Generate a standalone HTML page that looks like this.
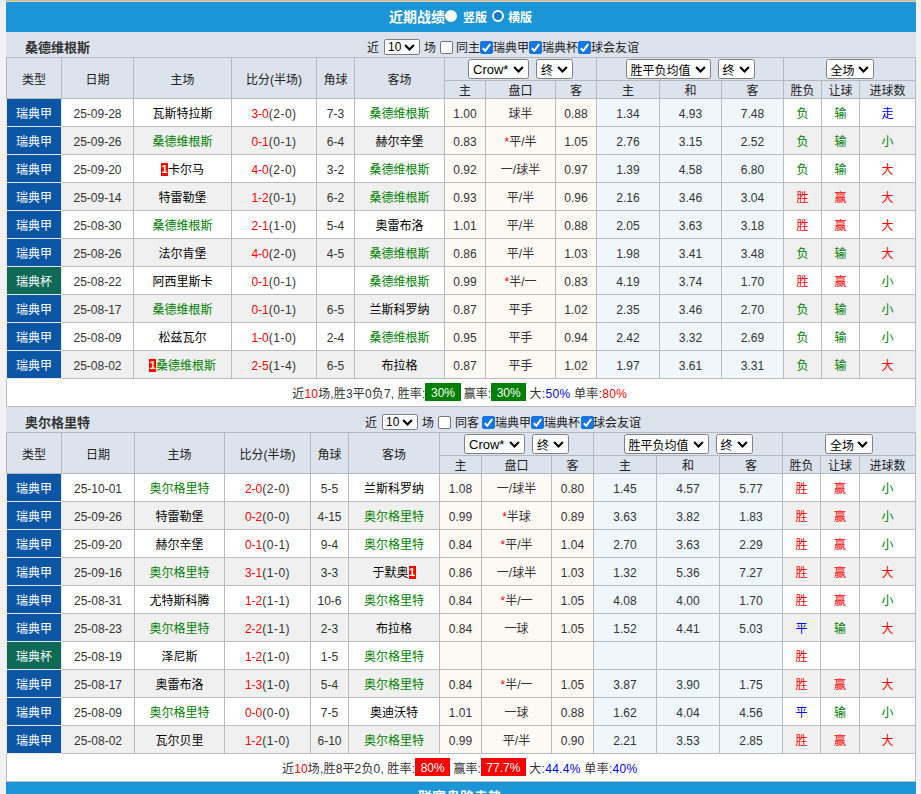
<!DOCTYPE html>
<html lang="zh-CN"><head><meta charset="utf-8"><title>近期战绩</title>
<style>
html,body{margin:0;padding:0;}
body{width:921px;height:794px;overflow:hidden;background:#f2f2f4;font-family:"Liberation Sans","Noto Sans CJK SC",sans-serif;font-size:12px;color:#333;position:relative;}
.topline{position:absolute;left:6px;top:0;width:910px;height:1px;background:#bdb7c2;}
.topline2{position:absolute;left:6px;top:1px;width:910px;height:1px;background:#e9d88e;}
.wrap{position:absolute;left:6px;top:2px;width:910px;}
.bar{height:30px;background:#1b95d6;color:#fff;text-align:center;line-height:30px;font-size:12px;position:relative;}
.bar b{font-size:14px;position:absolute;left:383px;top:0;}
.bar2 b{left:412px;top:0;}
.bar2{position:absolute;top:780px;left:0;width:910px;}
.rd{position:absolute;width:12px;height:12px;border-radius:50%;border:2px solid #fff;top:8px;box-sizing:border-box;}
.r1{left:439px;background:#fff;}
.r2{left:486px;background:#1577d6;}
.rl{position:absolute;top:1px;font-size:12px;font-weight:bold;}
.l1{left:457px;}
.l2{left:502px;}
.tt{height:25px;background:#dde3ed;position:relative;width:910px;}
.tn{position:absolute;left:19px;top:3px;line-height:26px;font-size:13px;color:#333;}
.ctl{position:absolute;left:0;top:0;height:25px;line-height:32px;font-size:12px;color:#222;}
.ctl span,.ctl i{position:absolute;top:0;white-space:nowrap;}
.ctl i.cb{top:9px;}
.ctl .sel{top:7px;height:16px;line-height:14px;border-radius:2px;width:36px;font-size:12px;padding-left:3px;}
.ctl .sel .ar{top:4px;}
.t{border-collapse:collapse;table-layout:fixed;width:910px;margin:0;}
.t th,.t td{border:1px solid #bbb;padding:0;text-align:center;font-weight:normal;overflow:hidden;white-space:nowrap;}
.t th{background:#dde3ed;color:#222;border-color:#b4b8c0;}
.h1{height:23px;}
.h2{height:18px;}
.t td{height:27px;}
tr.ra td{background:#fff;}
tr.rz td{background:#f0f0f0;}
.t td.ty{background:#0b55a5;color:#fff;border-color:#e6e4e6;}
.t td.ty.cup{background:#0e6a57;}
.t td.o1{background:#fdf9f5;}
.t td.o2{background:#f0f7fc;}
.g{color:#008000;}
.r{color:#f00;}
.b{color:#00f;}
.t td.g{color:#008000;}
.t td.r{color:#f00;}
.t td.b{color:#00f;}
.rc{font-style:normal;background:#f00;color:#ffd;font-weight:bold;font-size:11px;display:inline-block;width:7px;height:13px;line-height:13px;vertical-align:1px;text-align:center;}
tr.sm td{background:#fff;height:27px;}
.bg{color:#fff;padding:3px 5.5px 1px;margin:0;position:relative;top:-1px;}
.gb{background:#008000;}
.rb{background:#f00;}
.sel{display:inline-block;box-sizing:border-box;height:20px;border:1px solid #808080;border-radius:2.5px;background:#fff;color:#000;font-size:12px;line-height:17px;text-align:left;padding-left:4px;position:relative;vertical-align:middle;}
.ar{position:absolute;right:4px;top:6px;width:11px;height:6.6px;}
.ar path{fill:none;stroke:#000;stroke-width:1.9;}
.cb{width:13px;height:13px;box-sizing:border-box;border:1px solid #767676;border-radius:2px;background:#fff;}
.cb.on{background:#1675e0;border-color:#1675e0;}
.cb svg{position:absolute;left:-1px;top:-1px;width:13px;height:13px;}
.cb path{fill:none;stroke:#fff;stroke-width:2;}

.sc{width:61px;font-size:13px;}
.sz{width:37px;margin-left:7px;}
.sj{width:85px;}
.sq{width:48px;}

.t td.n{padding-top:2px;height:25px;}
.t td.tm{color:#000;}
.t td.tm.g{color:#008000;}

.smw{padding-right:2.5px;}
.pa{letter-spacing:0.15px;}
.pc{letter-spacing:0.3px;}

.sc{padding-top:1px;}
.sz,.sj,.sq{padding-top:3px;}
.hs{letter-spacing:.5px;}

</style></head><body>
<div class="topline"></div><div class="topline2"></div>
<div class="wrap">
<div class="bar"><b>近期战绩</b><i class="rd r1"></i><span class="rl l1">竖版</span><i class="rd r2"></i><span class="rl l2">横版</span></div>
<div class="tt"><b class="tn">桑德维根斯</b><div class="ctl"><span style="left:361px">近</span><span class="sel s10" style="left:378px">10<svg class="ar" viewBox="0 0 10 6"><path d="M1 1L5 5L9 1"/></svg></span><span style="left:418px">场</span><i class="cb" style="left:434px"></i><span style="left:450px">同主</span><i class="cb on" style="left:474px"><svg viewBox="0 0 13 13"><path d="M2.8 7.2L5.3 9.8L10.2 3.2"/></svg></i><span style="left:487px">瑞典甲</span><i class="cb on" style="left:523px"><svg viewBox="0 0 13 13"><path d="M2.8 7.2L5.3 9.8L10.2 3.2"/></svg></i><span style="left:536px">瑞典杯</span><i class="cb on" style="left:572px"><svg viewBox="0 0 13 13"><path d="M2.8 7.2L5.3 9.8L10.2 3.2"/></svg></i><span style="left:585px">球会友谊</span></div></div>
<table class="t"><colgroup><col style="width:55px"><col style="width:72px"><col style="width:98px"><col style="width:85px"><col style="width:38px"><col style="width:90px"><col style="width:41px"><col style="width:70px"><col style="width:41px"><col style="width:63px"><col style="width:62px"><col style="width:62px"><col style="width:38px"><col style="width:38px"><col style="width:56px"></colgroup>
<tr class="h1"><th rowspan="2">类型</th><th rowspan="2">日期</th><th rowspan="2">主场</th><th rowspan="2">比分(半场)</th><th rowspan="2">角球</th><th rowspan="2">客场</th><th colspan="3"><span class="sel sc">Crow*<svg class="ar" viewBox="0 0 10 6"><path d="M1 1L5 5L9 1"/></svg></span><span class="sel sz">终<svg class="ar" viewBox="0 0 10 6"><path d="M1 1L5 5L9 1"/></svg></span></th><th colspan="3"><span class="sel sj">胜平负均值<svg class="ar" viewBox="0 0 10 6"><path d="M1 1L5 5L9 1"/></svg></span><span class="sel sz">终<svg class="ar" viewBox="0 0 10 6"><path d="M1 1L5 5L9 1"/></svg></span></th><th colspan="3"><span class="sel sq">全场<svg class="ar" viewBox="0 0 10 6"><path d="M1 1L5 5L9 1"/></svg></span></th></tr>
<tr class="h2"><th>主</th><th>盘口</th><th>客</th><th>主</th><th>和</th><th>客</th><th>胜负</th><th>让球</th><th>进球数</th></tr>
<tr class="ra"><td class="ty">瑞典甲</td><td class="n">25-09-28</td><td class="tm">瓦斯特拉斯</td><td class="n"><span class="r">3-0</span><span class="hs">(2-0)</span></td><td class="n">7-3</td><td class="tm g">桑德维根斯</td><td class="o1 n">1.00</td><td class="o1">球半</td><td class="o1 n">0.88</td><td class="o2 n">1.34</td><td class="o2 n">4.93</td><td class="o2 n">7.48</td><td class="g">负</td><td class="g">输</td><td class="b">走</td></tr>
<tr class="rz"><td class="ty">瑞典甲</td><td class="n">25-09-26</td><td class="tm g">桑德维根斯</td><td class="n"><span class="r">0-1</span><span class="hs">(0-1)</span></td><td class="n">6-4</td><td class="tm">赫尔辛堡</td><td class="o1 n">0.83</td><td class="o1"><span class="r">*</span>平/半</td><td class="o1 n">1.05</td><td class="o2 n">2.76</td><td class="o2 n">3.15</td><td class="o2 n">2.52</td><td class="g">负</td><td class="g">输</td><td class="g">小</td></tr>
<tr class="ra"><td class="ty">瑞典甲</td><td class="n">25-09-20</td><td class="tm"><i class="rc">1</i>卡尔马</td><td class="n"><span class="r">4-0</span><span class="hs">(2-0)</span></td><td class="n">3-2</td><td class="tm g">桑德维根斯</td><td class="o1 n">0.92</td><td class="o1">一/球半</td><td class="o1 n">0.97</td><td class="o2 n">1.39</td><td class="o2 n">4.58</td><td class="o2 n">6.80</td><td class="g">负</td><td class="g">输</td><td class="r">大</td></tr>
<tr class="rz"><td class="ty">瑞典甲</td><td class="n">25-09-14</td><td class="tm">特雷勒堡</td><td class="n"><span class="r">1-2</span><span class="hs">(0-1)</span></td><td class="n">6-2</td><td class="tm g">桑德维根斯</td><td class="o1 n">0.93</td><td class="o1">平/半</td><td class="o1 n">0.96</td><td class="o2 n">2.16</td><td class="o2 n">3.46</td><td class="o2 n">3.04</td><td class="r">胜</td><td class="r">赢</td><td class="r">大</td></tr>
<tr class="ra"><td class="ty">瑞典甲</td><td class="n">25-08-30</td><td class="tm g">桑德维根斯</td><td class="n"><span class="r">2-1</span><span class="hs">(1-0)</span></td><td class="n">5-4</td><td class="tm">奥雷布洛</td><td class="o1 n">1.01</td><td class="o1">平/半</td><td class="o1 n">0.88</td><td class="o2 n">2.05</td><td class="o2 n">3.63</td><td class="o2 n">3.18</td><td class="r">胜</td><td class="r">赢</td><td class="r">大</td></tr>
<tr class="rz"><td class="ty">瑞典甲</td><td class="n">25-08-26</td><td class="tm">法尔肯堡</td><td class="n"><span class="r">4-0</span><span class="hs">(2-0)</span></td><td class="n">4-5</td><td class="tm g">桑德维根斯</td><td class="o1 n">0.86</td><td class="o1">平/半</td><td class="o1 n">1.03</td><td class="o2 n">1.98</td><td class="o2 n">3.41</td><td class="o2 n">3.48</td><td class="g">负</td><td class="g">输</td><td class="r">大</td></tr>
<tr class="ra"><td class="ty cup">瑞典杯</td><td class="n">25-08-22</td><td class="tm">阿西里斯卡</td><td class="n"><span class="r">0-1</span><span class="hs">(0-1)</span></td><td class="n"></td><td class="tm g">桑德维根斯</td><td class="o1 n">0.99</td><td class="o1"><span class="r">*</span>半/一</td><td class="o1 n">0.83</td><td class="o2 n">4.19</td><td class="o2 n">3.74</td><td class="o2 n">1.70</td><td class="r">胜</td><td class="r">赢</td><td class="g">小</td></tr>
<tr class="rz"><td class="ty">瑞典甲</td><td class="n">25-08-17</td><td class="tm g">桑德维根斯</td><td class="n"><span class="r">0-1</span><span class="hs">(0-1)</span></td><td class="n">6-5</td><td class="tm">兰斯科罗纳</td><td class="o1 n">0.87</td><td class="o1">平手</td><td class="o1 n">1.02</td><td class="o2 n">2.35</td><td class="o2 n">3.46</td><td class="o2 n">2.70</td><td class="g">负</td><td class="g">输</td><td class="g">小</td></tr>
<tr class="ra"><td class="ty">瑞典甲</td><td class="n">25-08-09</td><td class="tm">松兹瓦尔</td><td class="n"><span class="r">1-0</span><span class="hs">(1-0)</span></td><td class="n">2-4</td><td class="tm g">桑德维根斯</td><td class="o1 n">0.95</td><td class="o1">平手</td><td class="o1 n">0.94</td><td class="o2 n">2.42</td><td class="o2 n">3.32</td><td class="o2 n">2.69</td><td class="g">负</td><td class="g">输</td><td class="g">小</td></tr>
<tr class="rz"><td class="ty">瑞典甲</td><td class="n">25-08-02</td><td class="tm g"><i class="rc">1</i>桑德维根斯</td><td class="n"><span class="r">2-5</span><span class="hs">(1-4)</span></td><td class="n">6-5</td><td class="tm">布拉格</td><td class="o1 n">0.87</td><td class="o1">平手</td><td class="o1 n">1.02</td><td class="o2 n">1.97</td><td class="o2 n">3.61</td><td class="o2 n">3.31</td><td class="g">负</td><td class="g">输</td><td class="r">大</td></tr>
<tr class="sm"><td colspan="15"><span class="smw"><span class="pa">近<span class="r">10</span>场,胜3平0负7, 胜率:</span><span class="bg gb">30%</span> 赢率:<span class="bg gb">30%</span> <span class="pc">大:<span class="b">50%</span> 单率:<span class="r">80%</span></span></span></td></tr>
</table>
<div class="tt"><b class="tn">奥尔格里特</b><div class="ctl"><span style="left:359px">近</span><span class="sel s10" style="left:376px">10<svg class="ar" viewBox="0 0 10 6"><path d="M1 1L5 5L9 1"/></svg></span><span style="left:416px">场</span><i class="cb" style="left:432px"></i><span style="left:449px">同客</span><i class="cb on" style="left:476px"><svg viewBox="0 0 13 13"><path d="M2.8 7.2L5.3 9.8L10.2 3.2"/></svg></i><span style="left:489px">瑞典甲</span><i class="cb on" style="left:525px"><svg viewBox="0 0 13 13"><path d="M2.8 7.2L5.3 9.8L10.2 3.2"/></svg></i><span style="left:538px">瑞典杯</span><i class="cb on" style="left:575px"><svg viewBox="0 0 13 13"><path d="M2.8 7.2L5.3 9.8L10.2 3.2"/></svg></i><span style="left:587px">球会友谊</span></div></div>
<table class="t"><colgroup><col style="width:55px"><col style="width:73px"><col style="width:90px"><col style="width:86px"><col style="width:38px"><col style="width:91px"><col style="width:42px"><col style="width:70px"><col style="width:42px"><col style="width:63px"><col style="width:63px"><col style="width:63px"><col style="width:38px"><col style="width:39px"><col style="width:56px"></colgroup>
<tr class="h1"><th rowspan="2">类型</th><th rowspan="2">日期</th><th rowspan="2">主场</th><th rowspan="2">比分(半场)</th><th rowspan="2">角球</th><th rowspan="2">客场</th><th colspan="3"><span class="sel sc">Crow*<svg class="ar" viewBox="0 0 10 6"><path d="M1 1L5 5L9 1"/></svg></span><span class="sel sz">终<svg class="ar" viewBox="0 0 10 6"><path d="M1 1L5 5L9 1"/></svg></span></th><th colspan="3"><span class="sel sj">胜平负均值<svg class="ar" viewBox="0 0 10 6"><path d="M1 1L5 5L9 1"/></svg></span><span class="sel sz">终<svg class="ar" viewBox="0 0 10 6"><path d="M1 1L5 5L9 1"/></svg></span></th><th colspan="3"><span class="sel sq">全场<svg class="ar" viewBox="0 0 10 6"><path d="M1 1L5 5L9 1"/></svg></span></th></tr>
<tr class="h2"><th>主</th><th>盘口</th><th>客</th><th>主</th><th>和</th><th>客</th><th>胜负</th><th>让球</th><th>进球数</th></tr>
<tr class="ra"><td class="ty">瑞典甲</td><td class="n">25-10-01</td><td class="tm g">奥尔格里特</td><td class="n"><span class="r">2-0</span><span class="hs">(2-0)</span></td><td class="n">5-5</td><td class="tm">兰斯科罗纳</td><td class="o1 n">1.08</td><td class="o1">一/球半</td><td class="o1 n">0.80</td><td class="o2 n">1.45</td><td class="o2 n">4.57</td><td class="o2 n">5.77</td><td class="r">胜</td><td class="r">赢</td><td class="g">小</td></tr>
<tr class="rz"><td class="ty">瑞典甲</td><td class="n">25-09-26</td><td class="tm">特雷勒堡</td><td class="n"><span class="r">0-2</span><span class="hs">(0-0)</span></td><td class="n">4-15</td><td class="tm g">奥尔格里特</td><td class="o1 n">0.99</td><td class="o1"><span class="r">*</span>半球</td><td class="o1 n">0.89</td><td class="o2 n">3.63</td><td class="o2 n">3.82</td><td class="o2 n">1.83</td><td class="r">胜</td><td class="r">赢</td><td class="g">小</td></tr>
<tr class="ra"><td class="ty">瑞典甲</td><td class="n">25-09-20</td><td class="tm">赫尔辛堡</td><td class="n"><span class="r">0-1</span><span class="hs">(0-1)</span></td><td class="n">9-4</td><td class="tm g">奥尔格里特</td><td class="o1 n">0.84</td><td class="o1"><span class="r">*</span>平/半</td><td class="o1 n">1.04</td><td class="o2 n">2.70</td><td class="o2 n">3.63</td><td class="o2 n">2.29</td><td class="r">胜</td><td class="r">赢</td><td class="g">小</td></tr>
<tr class="rz"><td class="ty">瑞典甲</td><td class="n">25-09-16</td><td class="tm g">奥尔格里特</td><td class="n"><span class="r">3-1</span><span class="hs">(1-0)</span></td><td class="n">3-3</td><td class="tm">于默奥<i class="rc">1</i></td><td class="o1 n">0.86</td><td class="o1">一/球半</td><td class="o1 n">1.03</td><td class="o2 n">1.32</td><td class="o2 n">5.36</td><td class="o2 n">7.27</td><td class="r">胜</td><td class="r">赢</td><td class="r">大</td></tr>
<tr class="ra"><td class="ty">瑞典甲</td><td class="n">25-08-31</td><td class="tm">尤特斯科腾</td><td class="n"><span class="r">1-2</span><span class="hs">(1-1)</span></td><td class="n">10-6</td><td class="tm g">奥尔格里特</td><td class="o1 n">0.84</td><td class="o1"><span class="r">*</span>半/一</td><td class="o1 n">1.05</td><td class="o2 n">4.08</td><td class="o2 n">4.00</td><td class="o2 n">1.70</td><td class="r">胜</td><td class="r">赢</td><td class="g">小</td></tr>
<tr class="rz"><td class="ty">瑞典甲</td><td class="n">25-08-23</td><td class="tm g">奥尔格里特</td><td class="n"><span class="r">2-2</span><span class="hs">(1-1)</span></td><td class="n">2-3</td><td class="tm">布拉格</td><td class="o1 n">0.84</td><td class="o1">一球</td><td class="o1 n">1.05</td><td class="o2 n">1.52</td><td class="o2 n">4.41</td><td class="o2 n">5.03</td><td class="b">平</td><td class="g">输</td><td class="r">大</td></tr>
<tr class="ra"><td class="ty cup">瑞典杯</td><td class="n">25-08-19</td><td class="tm">泽尼斯</td><td class="n"><span class="r">1-2</span><span class="hs">(1-0)</span></td><td class="n">1-5</td><td class="tm g">奥尔格里特</td><td class="o1 n"></td><td class="o1"></td><td class="o1 n"></td><td class="o2 n"></td><td class="o2 n"></td><td class="o2 n"></td><td class="r">胜</td><td class="r"></td><td class="r"></td></tr>
<tr class="rz"><td class="ty">瑞典甲</td><td class="n">25-08-17</td><td class="tm">奥雷布洛</td><td class="n"><span class="r">1-3</span><span class="hs">(1-0)</span></td><td class="n">5-4</td><td class="tm g">奥尔格里特</td><td class="o1 n">0.84</td><td class="o1"><span class="r">*</span>半/一</td><td class="o1 n">1.05</td><td class="o2 n">3.87</td><td class="o2 n">3.90</td><td class="o2 n">1.75</td><td class="r">胜</td><td class="r">赢</td><td class="r">大</td></tr>
<tr class="ra"><td class="ty">瑞典甲</td><td class="n">25-08-09</td><td class="tm g">奥尔格里特</td><td class="n"><span class="r">0-0</span><span class="hs">(0-0)</span></td><td class="n">7-5</td><td class="tm">奥迪沃特</td><td class="o1 n">1.01</td><td class="o1">一球</td><td class="o1 n">0.88</td><td class="o2 n">1.62</td><td class="o2 n">4.04</td><td class="o2 n">4.56</td><td class="b">平</td><td class="g">输</td><td class="g">小</td></tr>
<tr class="rz"><td class="ty">瑞典甲</td><td class="n">25-08-02</td><td class="tm">瓦尔贝里</td><td class="n"><span class="r">1-2</span><span class="hs">(1-0)</span></td><td class="n">6-10</td><td class="tm g">奥尔格里特</td><td class="o1 n">0.99</td><td class="o1">平/半</td><td class="o1 n">0.90</td><td class="o2 n">2.21</td><td class="o2 n">3.53</td><td class="o2 n">2.85</td><td class="r">胜</td><td class="r">赢</td><td class="r">大</td></tr>
<tr class="sm"><td colspan="15"><span class="smw"><span class="pa">近<span class="r">10</span>场,胜8平2负0, 胜率:</span><span class="bg rb">80%</span> 赢率:<span class="bg rb">77.7%</span> <span class="pc">大:<span class="b">44.4%</span> 单率:<span class="b">40%</span></span></span></td></tr>
</table>
<div class="bar bar2"><b>联赛盘路走势</b></div>
</div>
</body></html>
